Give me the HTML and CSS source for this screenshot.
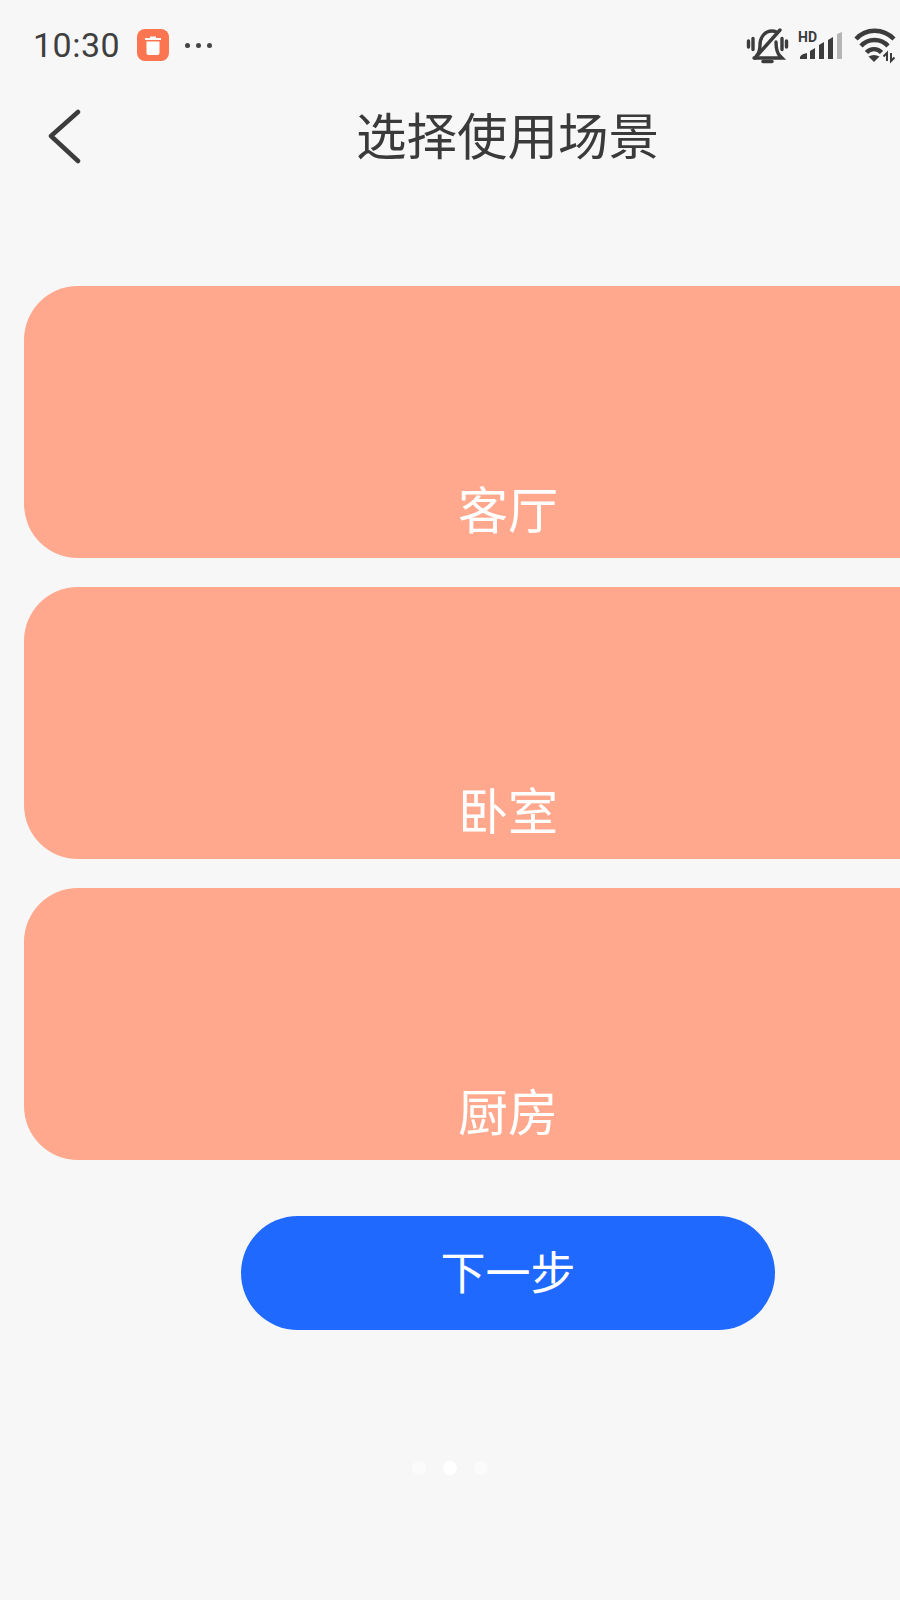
FILE: index.html
```html
<!DOCTYPE html>
<html lang="zh-CN">
<head>
  <meta charset="UTF-8">
  <title>选择使用场景</title>
  <link rel="stylesheet" href="styles.css">
</head>
<body>

<div class="status-bar">
  <div class="status-left">
    <span class="time">10:30</span>
    <span class="app-badge">
      <svg width="16" height="19" viewBox="0 0 16 19"><path d="M5 2V.5h6V2h5v2H0V2z" fill="#fff"/><path d="M1.500 5.500h13v11.500a2 2 0 0 1-2 2h-9a2 2 0 0 1-2-2z" fill="#fff"/></svg>
    </span>
    <span class="more-dots"><i></i><i></i><i></i></span>
  </div>
  <div class="status-right">
    <!-- 静音 -->
    <svg width="45" height="40" viewBox="0 0 45 40" fill="none" stroke="#3c3c3c" stroke-width="3.400" stroke-linecap="round">
      <path d="M3.500 16v6M8 13.500v11M37 13.500v11M41.500 16v6"/>
      <path d="M11.500 31c2.500-3 3.500-6 3.500-11 0-8 5-14 12-14 2 0 3 .3 4.500 1"/>
      <path d="M31 17c0 6 1 11 4 14l2 2H9"/>
      <path d="M35 5 10 33"/>
      <path d="M18 36.500h9"/>
    </svg>
    <!-- 信号 -->
    <div class="signal">
      <span class="hd">HD</span>
      <svg width="60" height="40" viewBox="0 0 60 40">
        <path d="M10 34v-2q1-3 7-4v6z" fill="#3c3c3c"/>
        <path d="M20 34v-8l5-3v11z" fill="#3c3c3c"/>
        <path d="M29 34v-14l5-3v17z" fill="#3c3c3c"/>
        <path d="M38 34v-19l5-3v22z" fill="#3c3c3c"/>
        <path d="M47 34v-25l5-2v27z" fill="#b5b5b5"/>
      </svg>
    </div>
    <!-- wifi -->
    <svg width="50" height="40" viewBox="0 0 50 40" fill="none" stroke="#3c3c3c" stroke-width="4.400">
      <path d="M6 14C16 3 33 3 44 14"/>
      <path d="M11 21c7-8 20-8 27 0"/>
      <path d="M16.500 27.500c4-4.500 11-4.500 15 0"/>
      <path d="M24 37l-5.500-5.500c3.500-2 7.500-2 11 0z" fill="#3c3c3c" stroke="none"/>
      <path d="M37 36v-8l-3.500 3.500M41 28v8l3.500-3.500" stroke-width="2"/>
    </svg>
  </div>
</div>

<div class="screen">
  <div class="nav-bar">
    <svg class="back" width="36" height="56" viewBox="0 0 36 56" fill="none" stroke="#3c3c3c" stroke-width="4.500" stroke-linecap="round" stroke-linejoin="round">
      <path d="M32 3 5 27l27 25"/>
    </svg>
    <h1 class="title">选择使用场景</h1>
  </div>

  <div class="scene-list">
    <div class="scene-card">客厅</div>
    <div class="scene-card">卧室</div>
    <div class="scene-card">厨房</div>
  </div>

  <button class="next-btn">下一步</button>

  <div class="dots">
    <span class="dot"></span>
    <span class="dot active"></span>
    <span class="dot"></span>
  </div>
</div>

</body>
</html>
```

FILE: styles.css
```css
html, body {
  width: 900px;
  height: 1600px;
  margin: 0;
  overflow: hidden;
}

body {
  background-color: #f7f7f7;
  font-family: "Noto Sans CJK SC", "Noto Sans", sans-serif;
  color: #3c3c3c;
}

/* 状态栏 */
.status-bar {
  display: flex;
  justify-content: space-between;
  align-items: center;
  height: 76px;
  padding: 14px 0 0 33px;
  box-sizing: border-box;
  width: 900px;
}

.status-left,
.status-right {
  display: flex;
  align-items: center;
}

.time {
  font-family: Roboto, sans-serif;
  font-size: 34px;
  line-height: 62px;
  letter-spacing: 0.5px;
  color: #3f3f3f;
}

.app-badge {
  display: flex;
  justify-content: center;
  align-items: center;
  width: 32px;
  height: 32px;
  margin-left: 17px;
  border-radius: 8px;
  background-color: #fb7650;
}

.more-dots {
  display: flex;
  gap: 6px;
  margin-left: 16px;
}

.more-dots i {
  width: 5px;
  height: 5px;
  border-radius: 50%;
  background-color: #444;
}

.signal {
  position: relative;
  width: 60px;
  height: 40px;
}

.signal svg {
  display: block;
}

.hd {
  position: absolute;
  top: 5px;
  left: 8px;
  font-family: Roboto, sans-serif;
  font-weight: 700;
  font-size: 14px;
  line-height: 14px;
  color: #3c3c3c;
}

/* 内容比视口宽,右侧被裁掉 */
.screen {
  display: flex;
  flex-direction: column;
  align-items: center;
  width: 1014px;
  padding-top: 18px;
}

.nav-bar {
  position: relative;
  display: flex;
  justify-content: center;
  align-items: center;
  width: 100%;
  height: 84px;
}

.back {
  position: absolute;
  left: 46px;
  top: 15px;
}

.title {
  margin: 0;
  padding: 0 0 5px 1px;
  font-size: 50.500px;
  font-weight: 400;
  line-height: 79px;
  color: #3a3a3a;
}

.scene-list {
  display: flex;
  flex-direction: column;
  gap: 29px;
  margin-top: 108px;
}

.scene-card {
  display: flex;
  justify-content: center;
  align-items: flex-end;
  width: 966px;
  height: 272px;
  padding: 0 0 17px 2px;
  box-sizing: border-box;
  border-radius: 54px;
  background-color: #ffa88d;
  font-size: 50px;
  line-height: 68px;
  color: #fff;
}

.next-btn {
  width: 534px;
  height: 114px;
  margin: 56px 0 0 2px;
  padding-bottom: 6px;
  border: none;
  border-radius: 57px;
  background-color: #1f69ff;
  font-family: inherit;
  font-size: 45px;
  color: #fff;
}

/* 分页点按视口居中 */
.dots {
  display: flex;
  justify-content: center;
  align-self: flex-start;
  gap: 17px;
  width: 900px;
  margin-top: 131px;
}

.dot {
  width: 14px;
  height: 14px;
  border-radius: 50%;
  background-color: #fbfbfb;
}

.dot.active {
  background-color: #fff;
}
```
